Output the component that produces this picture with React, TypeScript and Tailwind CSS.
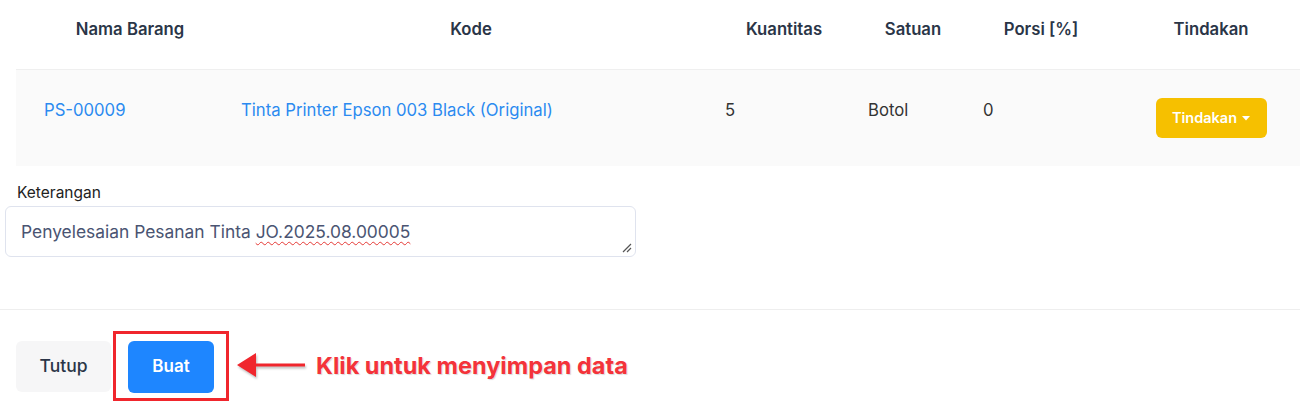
const cols = "grid grid-cols-[228px_454px_172px_86px_170px_170px]";

function Caret() {
  return (
    <svg width="8" height="5" viewBox="0 0 8 5" className="ml-[5px]" aria-hidden="true">
      <path d="M0 0h8L4 4.5z" fill="currentColor" />
    </svg>
  );
}

function ResizeGrip() {
  return (
    <svg width="10" height="10" viewBox="0 0 10 10" className="absolute bottom-[3px] right-[3px]" aria-hidden="true">
      <path d="M9 1L1 9M9 5L5 9" stroke="#555" strokeWidth="1.2" />
    </svg>
  );
}

export default function App() {
  return (
    <div className="w-[1300px] h-[413px] overflow-hidden bg-white font-['Inter',sans-serif] text-[#2a3547]">
      {/* header */}
      <div className={`${cols} ml-[16px] h-[69px] items-start pt-[17px] text-[16.7px] leading-6 font-semibold`}>
        <div className="text-center">Nama Barang</div>
        <div className="text-center">Kode</div>
        <div className="text-center">Kuantitas</div>
        <div className="text-center">Satuan</div>
        <div className="text-center">Porsi [%]</div>
        <div className="text-center">Tindakan</div>
      </div>

      {/* row */}
      <div className={`${cols} ml-[16px] h-[97px] items-start border-t border-[#efefef] bg-[#fafafa] pt-[28px] text-[16.7px] leading-6`}>
        <div className="pl-[28px] text-[#2b8af0]">PS-00009</div>
        <div className="-ml-[3px] text-[#2b8af0]">Tinta Printer Epson 003 Black (Original)</div>
        <div className="pl-[27px] text-[#333]">5</div>
        <div className="-ml-[2px] text-[#333]">Botol</div>
        <div className="pl-[27px] text-[#333]">0</div>
        <div className="flex justify-center">
          <button className="flex h-[40px] w-[111px] items-center justify-center rounded-md bg-[#f6c000] text-[14.5px] font-semibold text-white">
            Tindakan
            <Caret />
          </button>
        </div>
      </div>

      {/* keterangan */}
      <div className="mt-[17px]">
        <label className="ml-[17px] block text-[15.5px] leading-5 text-[#222]">Keterangan</label>
        <div className="relative ml-[5px] mt-[3px] h-[51px] w-[631px] rounded-md border border-[#dfe3ee] bg-white px-[15px] pt-[13px] text-[17.4px] leading-6 text-[#4a5472]">
          Penyelesaian Pesanan Tinta{" "}
          <span className="underline decoration-wavy decoration-[#e53935] decoration-1 underline-offset-[3px]">
            JO.2025.08.00005
          </span>
          <ResizeGrip />
        </div>
      </div>

      <div className="mt-[52px] border-t border-[#eeeeee]" />

      {/* footer */}
      <div className="flex items-center pt-[21px]">
        <button className="ml-[16px] h-[51px] w-[95px] rounded-md bg-[#f6f6f7] text-[17.5px] font-medium text-[#2a3547]">
          Tutup
        </button>
        <div className="ml-[2px] flex h-[70px] w-[116px] items-start border-[3px] border-[#f0262d] pl-[12px] pt-[7px]">
          <button className="h-[52px] w-[86px] rounded-md bg-[#1e86ff] text-[17px] font-semibold text-white">
            Buat
          </button>
        </div>
        <svg width="70" height="28" viewBox="0 0 70 28" className="ml-[8px] drop-shadow-[1px_2px_1px_rgba(0,0,0,0.25)]" aria-hidden="true">
          <path d="M0 13L19 1v10.5h49v3H19V25z" fill="#f0262d" />
        </svg>
        <span className="ml-[9px] text-[23.5px] font-bold text-[#f4333a] [text-shadow:1px_1px_1px_rgba(0,0,0,0.15)]">
          Klik untuk menyimpan data
        </span>
      </div>
    </div>
  );
}
